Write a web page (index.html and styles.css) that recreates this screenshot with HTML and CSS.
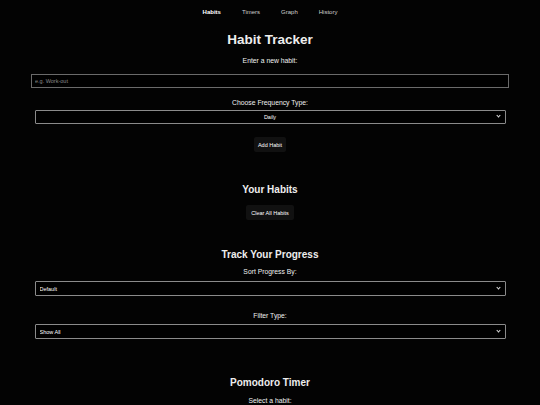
FILE: index.html
```html
<!DOCTYPE html>
<html lang="en">

<head>
    <meta charset="UTF-8">
    <meta name="viewport" content="width=device-width, initial-scale=1.0">
    <title>Habit Tracker</title>
    <link rel="stylesheet" href="styles.css">
</head>

<body>
    <!-- top navigation -->
    <nav class="nav">
        <a href="#" class="nav-link active">Habits</a>
        <a href="#" class="nav-link">Timers</a>
        <a href="#" class="nav-link">Graph</a>
        <a href="#" class="nav-link">History</a>
    </nav>

    <!-- new habit form -->
    <section class="section">
        <h1 class="title">Habit Tracker</h1>
        <label class="label" for="habit-input">Enter a new habit:</label>
        <input type="text" id="habit-input" class="text-input" placeholder="e.g. Work-out">
        <label class="label label-freq" for="frequency">Choose Frequency Type:</label>
        <div class="select-wrap select-wrap-freq">
            <select id="frequency" class="select select-center">
                <option>Daily</option>
                <option>Weekly</option>
                <option>Monthly</option>
            </select>
        </div>
        <button class="btn btn-add">Add Habit</button>
    </section>

    <!-- list of habits -->
    <section class="section">
        <h2 class="subtitle habits-title">Your Habits</h2>
        <ul id="habit-list" class="habit-list"></ul>
        <button class="btn btn-clear">Clear All Habits</button>
    </section>

    <!-- progress -->
    <section class="section">
        <h2 class="subtitle progress-title">Track Your Progress</h2>
        <label class="label" for="sort-by">Sort Progress By:</label>
        <div class="select-wrap select-wrap-sort">
            <select id="sort-by" class="select">
                <option>Default</option>
                <option>Most Completed</option>
                <option>Least Completed</option>
            </select>
        </div>
        <label class="label label-filter" for="filter-type">Filter Type:</label>
        <div class="select-wrap select-wrap-filter">
            <select id="filter-type" class="select">
                <option>Show All</option>
                <option>Daily</option>
                <option>Weekly</option>
            </select>
        </div>
    </section>

    <!-- pomodoro -->
    <section class="section">
        <h2 class="subtitle pomodoro-title">Pomodoro Timer</h2>
        <label class="label label-pomo" for="pomo-habit">Select a habit:</label>
    </section>
</body>

</html>
```

FILE: styles.css
```css
/* dark theme for the habit tracker */
body {
    margin: 0;
    background-color: #030303;
    color: #eeeeee;
    font-family: "Liberation Sans", Arial, sans-serif;
}

.nav {
    display: flex;
    justify-content: center;
    gap: 21px;
    padding-top: 8px;
    line-height: 8px;
}

.nav-link {
    color: #cfcfcf;
    text-decoration: none;
    font-size: 6px;
}

.nav-link.active {
    color: #ffffff;
    font-weight: bold;
}

.section {
    display: flex;
    flex-direction: column;
    align-items: center;
}

.title {
    font-size: 13.5px;
    line-height: 16px;
    margin: 16px 0 9px;
}

.subtitle {
    font-size: 10px;
    line-height: 14px;
    margin: 0;
}

.habits-title {
    margin-top: 31px;
    margin-bottom: 8px;
}

.progress-title {
    margin-top: 28px;
    margin-bottom: 6px;
}

.pomodoro-title {
    margin-top: 37px;
    margin-bottom: 7px;
}

.label {
    font-size: 6.8px;
    line-height: 8px;
    color: #f0f0f0;
}

.label-freq {
    margin-top: 11px;
}

.label-filter {
    margin-top: 16px;
}

.text-input {
    box-sizing: border-box;
    width: 478px;
    height: 14px;
    margin-top: 9px;
    padding: 0 3px;
    background-color: #000000;
    border: 1px solid #6a6a6a;
    color: #ffffff;
    font-size: 5.5px;
    font-family: inherit;
    outline: none;
}

.text-input::placeholder {
    color: #8a8a8a;
}

/* wrapper draws the small chevron over the right end of the select */
.select-wrap {
    position: relative;
}

.select-wrap::after {
    content: "";
    position: absolute;
    right: 6px;
    top: 5px;
    width: 2px;
    height: 2px;
    border-right: 1px solid #dddddd;
    border-bottom: 1px solid #dddddd;
    transform: rotate(45deg);
    pointer-events: none;
}

.select-wrap-freq {
    margin-top: 3px;
}

.select-wrap-sort {
    margin-top: 5px;
}

.select-wrap-filter {
    margin-top: 4px;
}

.select {
    display: block;
    box-sizing: border-box;
    width: 471px;
    height: 15px;
    padding: 0 4px;
    appearance: none;
    background-color: #000000;
    border: 1px solid #8a8a8a;
    border-radius: 1px;
    color: #ffffff;
    font-size: 5.5px;
    font-family: inherit;
}

.select-center {
    text-align: center;
    text-align-last: center;
    height: 14px;
}

.select-wrap-freq::after {
    top: 4px;
}

.btn {
    box-sizing: border-box;
    height: 15px;
    padding: 0 4px;
    background-color: #111111;
    color: #ffffff;
    border: none;
    border-radius: 2px;
    font-size: 5.5px;
    font-family: inherit;
}

.btn-add {
    margin-top: 13px;
}

.btn-clear {
    padding: 0 5px;
}

.habit-list {
    margin: 0;
    padding: 0;
}
```
